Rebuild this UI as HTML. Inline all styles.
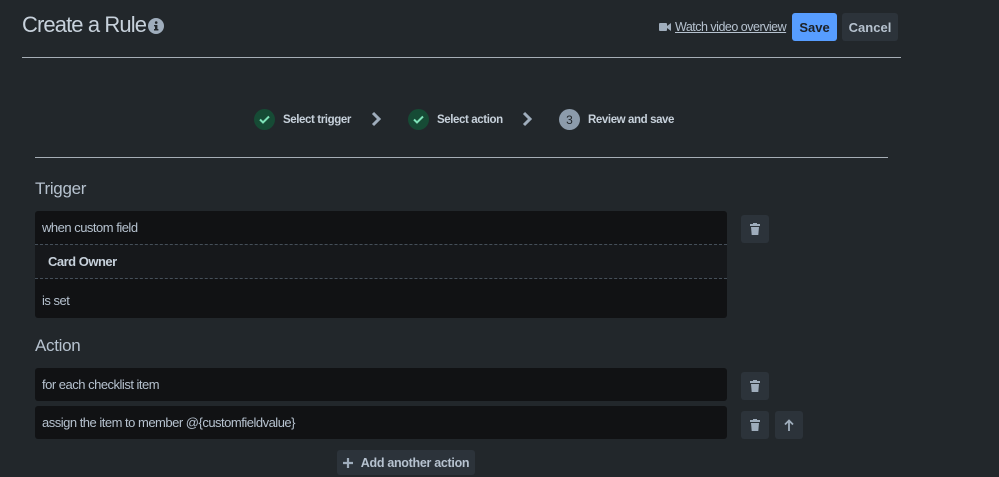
<!DOCTYPE html>
<html><head><style>
*{box-sizing:border-box;margin:0;padding:0}
body{width:999px;height:477px;background:#22272b;font-family:"Liberation Sans",sans-serif;color:#b6c2cf;position:relative;overflow:hidden}
.a{position:absolute}
.box{position:absolute;left:35px;width:692px;background:#111214;border-radius:3px;font-size:13px;letter-spacing:-0.5px;color:#b6c2cf;padding-left:7px;display:flex;align-items:center}
.ib{position:absolute;width:28px;height:28px;background:#2c333a;border-radius:3px;display:flex;align-items:center;justify-content:center}
.step{position:absolute;top:109px;height:21px;display:flex;align-items:center;font-size:11.5px;letter-spacing:-0.4px;font-weight:bold;color:#c7d1db;white-space:nowrap}
.c{width:21px;height:21px;border-radius:50%;display:flex;align-items:center;justify-content:center;margin-right:8px;letter-spacing:0}
.g{background:#164b35}
</style></head><body>
<div class="a" style="left:22px;top:12px;font-size:22px;letter-spacing:-0.9px;color:#c7d1db;white-space:nowrap">Create a Rule</div>
<svg class="a" style="left:148px;top:18px" width="16" height="16" viewBox="0 0 16 16"><circle cx="8" cy="8" r="8" fill="#9fadbc"/><rect x="7" y="7" width="2.4" height="5" fill="#22272b"/><rect x="6" y="11" width="4.4" height="1.5" fill="#22272b"/><rect x="6" y="7" width="2" height="1.4" fill="#22272b"/><circle cx="8.2" cy="4.6" r="1.3" fill="#22272b"/></svg>
<svg class="a" style="left:659px;top:22px" width="12" height="10" viewBox="0 0 12 10"><rect x="0" y="1" width="8" height="8" rx="1" fill="#9fadbc"/><path d="M8 4L12 1V9L8 6Z" fill="#9fadbc"/></svg>
<div class="a" style="left:675px;top:20px;font-size:12.5px;letter-spacing:-0.5px;color:#b6c2cf;text-decoration:underline;white-space:nowrap">Watch video overview</div>
<div class="a" style="left:792px;top:13px;width:45px;height:28px;background:#579dff;border-radius:3px;color:#1d2125;font-size:13px;font-weight:bold;display:flex;align-items:center;justify-content:center">Save</div>
<div class="a" style="left:842px;top:13px;width:56px;height:28px;background:#2c333a;border-radius:3px;color:#b6c2cf;font-size:13px;font-weight:bold;display:flex;align-items:center;justify-content:center">Cancel</div>
<div class="a" style="left:22px;top:57px;width:879px;height:1px;background:#a6aeb6"></div>

<div class="step" style="left:254px"><div class="c g"><svg width="11" height="9" viewBox="0 0 11 9"><path d="M1 4.5L4 7.5L10 1.5" stroke="#7ee2b8" stroke-width="2" fill="none"/></svg></div>Select trigger</div>
<svg class="a" style="left:371px;top:111px" width="10" height="16" viewBox="0 0 10 16"><path d="M2 2L8 8L2 14" stroke="#9fadbc" stroke-width="3" fill="none"/></svg>
<div class="step" style="left:408px"><div class="c g"><svg width="11" height="9" viewBox="0 0 11 9"><path d="M1 4.5L4 7.5L10 1.5" stroke="#7ee2b8" stroke-width="2" fill="none"/></svg></div>Select action</div>
<svg class="a" style="left:522px;top:111px" width="10" height="16" viewBox="0 0 10 16"><path d="M2 2L8 8L2 14" stroke="#9fadbc" stroke-width="3" fill="none"/></svg>
<div class="step" style="left:559px"><div class="c" style="background:#8c9bab;color:#22272b;font-weight:normal;font-size:12px">3</div>Review and save</div>
<div class="a" style="left:35px;top:157px;width:853px;height:1px;background:#a6aeb6"></div>

<div class="a" style="left:35px;top:179px;font-size:17px;letter-spacing:-0.3px;color:#b6c2cf">Trigger</div>
<div class="box" style="top:211px;height:33px;border-radius:3px 3px 0 0">when custom field</div>
<div class="box" style="top:244px;height:35px;border-radius:0;background:#16181b;border-top:1px dashed #454f59;border-bottom:1px dashed #454f59;padding-left:13px;font-weight:bold;color:#c7d1db">Card Owner</div>
<div class="box" style="top:279px;height:39px;border-radius:0 0 3px 3px;padding-top:4px">is set</div>
<div class="ib" style="left:741px;top:215px"><svg width="10" height="12" viewBox="0 0 10 12"><rect x="0" y="1" width="10" height="2" fill="#9fadbc"/><rect x="3" y="0" width="4" height="2" fill="#9fadbc"/><path d="M1 4H9L8.3 12H1.7Z" fill="#9fadbc"/></svg></div>

<div class="a" style="left:35px;top:336px;font-size:17px;letter-spacing:-0.3px;color:#b6c2cf">Action</div>
<div class="box" style="top:368px;height:33px">for each checklist item</div>
<div class="box" style="top:406px;height:33px">assign the item to member @{customfieldvalue}</div>
<div class="ib" style="left:741px;top:372px"><svg width="10" height="12" viewBox="0 0 10 12"><rect x="0" y="1" width="10" height="2" fill="#9fadbc"/><rect x="3" y="0" width="4" height="2" fill="#9fadbc"/><path d="M1 4H9L8.3 12H1.7Z" fill="#9fadbc"/></svg></div>
<div class="ib" style="left:741px;top:411px"><svg width="10" height="12" viewBox="0 0 10 12"><rect x="0" y="1" width="10" height="2" fill="#9fadbc"/><rect x="3" y="0" width="4" height="2" fill="#9fadbc"/><path d="M1 4H9L8.3 12H1.7Z" fill="#9fadbc"/></svg></div>
<div class="ib" style="left:775px;top:411px"><svg width="10" height="12" viewBox="0 0 10 12"><path d="M5 12V2M1 5.5L5 1.5L9 5.5" stroke="#9fadbc" stroke-width="1.8" fill="none"/></svg></div>
<div class="a" style="left:337px;top:450px;width:138px;height:25px;background:#2c333a;border-radius:3px;display:flex;align-items:center;justify-content:center;font-size:12.5px;letter-spacing:-0.3px;font-weight:bold;color:#b6c2cf;white-space:nowrap"><svg width="10" height="10" viewBox="0 0 10 10" style="margin-right:8px"><path d="M5 0V10M0 5H10" stroke="#9fadbc" stroke-width="2.2"/></svg>Add another action</div>
</body></html>
